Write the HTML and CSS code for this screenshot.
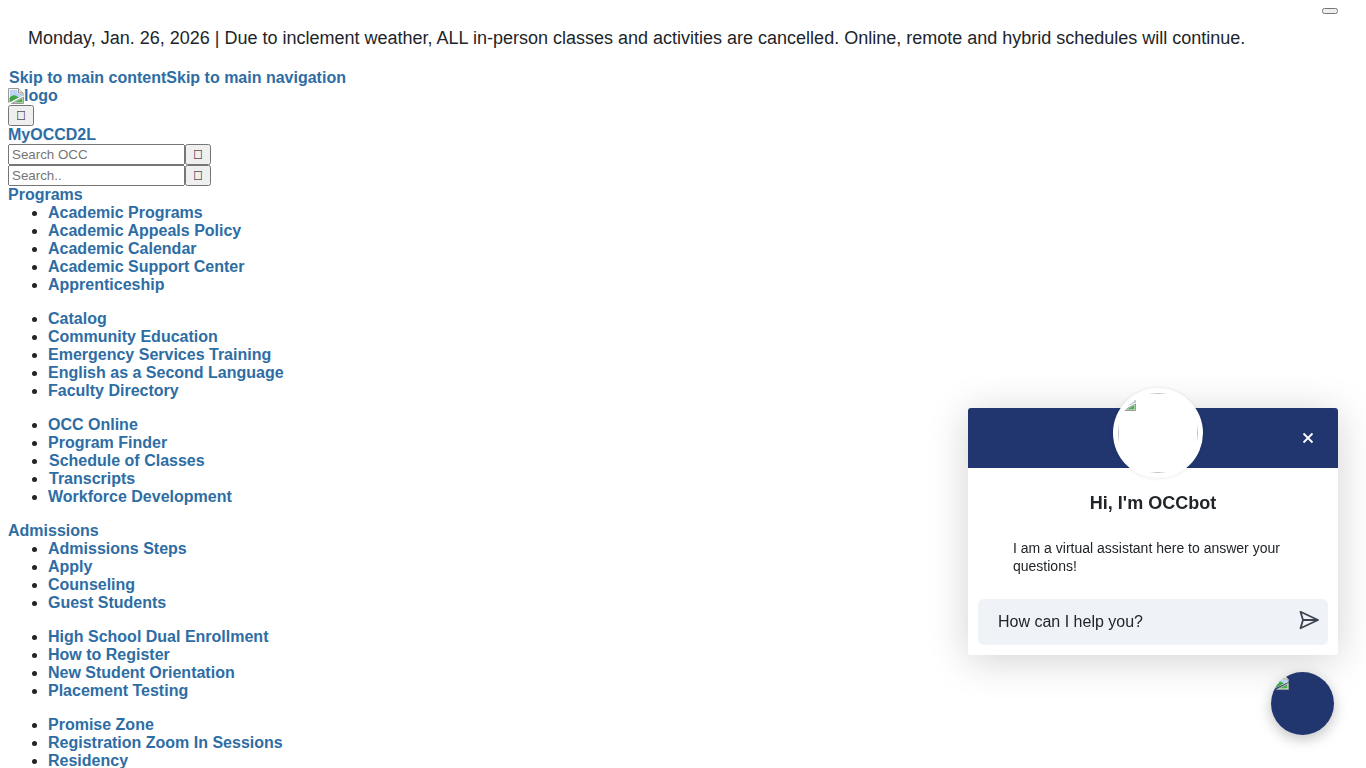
FILE: index.html
```html
<!DOCTYPE html>
<html lang="en">
<head>
<meta charset="utf-8">
<title>OCC</title>
<link rel="stylesheet" href="styles.css">
</head>
<body>
<svg class="defs" width="0" height="0" aria-hidden="true">
  <symbol id="broken" viewBox="0 0 16 16">
    <path d="M.5 15V.5h10l5 5V8L.5 15z" fill="#f4f4f4"/>
    <path d="M.5 14.500V.5h10l4.500 4.500v3" fill="none" stroke="#999"/>
    <path d="M10.500.5v4.500H15" fill="#e6e6e6" stroke="#999"/>
    <path d="M2 2h7.500v4H14v2.200L2 13.800z" fill="#bcd2f5"/>
    <path d="M1.500 14.500V10C4 7 6.500 6.500 9 8.500L11 9.200 1.500 14.500z" fill="#3fa63f"/>
    <path d="M3.500 15.500h12V9L3.500 15.500z" fill="#f4f4f4" stroke="#999"/>
    <path d="M6.500 14.500l8-4.200v4.200z" fill="#4fae4f"/>
  </symbol>
</svg>

<div class="banner">
  <button class="banner-close" type="button"></button>
  <p class="banner-text">Monday, Jan. 26, 2026 | Due to inclement weather, ALL in-person classes and activities are cancelled. Online, remote and hybrid schedules will continue.</p>
</div>

<div class="skip"><a href="#">Skip to main content</a><a href="#">Skip to main navigation</a></div>
<div class="logo"><a href="#"><svg class="broken" width="16" height="16"><use href="#broken"/></svg>logo</a></div>
<div class="row"><button type="button">&#xf0c9;</button></div>
<div class="link-row"><a href="#">MyOCCD2L</a></div>
<form class="search"><input type="text" placeholder="Search OCC"><button type="button">&#xf002;</button></form>
<form class="search"><input type="text" placeholder="Search.."><button type="button">&#xf002;</button></form>

<nav>
  <a href="#">Programs</a>
  <ul>
    <li><a href="#">Academic Programs</a></li>
    <li><a href="#">Academic Appeals Policy</a></li>
    <li><a href="#">Academic Calendar</a></li>
    <li><a href="#">Academic Support Center</a></li>
    <li><a href="#">Apprenticeship</a></li>
  </ul>
  <ul>
    <li><a href="#">Catalog</a></li>
    <li><a href="#">Community Education</a></li>
    <li><a href="#">Emergency Services Training</a></li>
    <li><a href="#">English as a Second Language</a></li>
    <li><a href="#">Faculty Directory</a></li>
  </ul>
  <ul>
    <li><a href="#">OCC Online</a></li>
    <li><a href="#">Program Finder</a></li>
    <li class="nudge"><a href="#">Schedule of Classes</a></li>
    <li class="nudge"><a href="#">Transcripts</a></li>
    <li><a href="#">Workforce Development</a></li>
  </ul>
  <a href="#">Admissions</a>
  <ul>
    <li><a href="#">Admissions Steps</a></li>
    <li><a href="#">Apply</a></li>
    <li><a href="#">Counseling</a></li>
    <li><a href="#">Guest Students</a></li>
  </ul>
  <ul>
    <li><a href="#">High School Dual Enrollment</a></li>
    <li><a href="#">How to Register</a></li>
    <li><a href="#">New Student Orientation</a></li>
    <li><a href="#">Placement Testing</a></li>
  </ul>
  <ul>
    <li><a href="#">Promise Zone</a></li>
    <li><a href="#">Registration Zoom In Sessions</a></li>
    <li><a href="#">Residency</a></li>
  </ul>
</nav>

<aside class="chat">
  <div class="chat-head">
    <div class="chat-avatar">
      <div class="round-img"><div class="frame"><svg class="frame-icon" width="16" height="16"><use href="#broken"/></svg></div></div>
    </div>
    <svg class="chat-x" width="12" height="12" viewBox="0 0 12 12"><path d="M1.500 1.500l9 9M10.500 1.500l-9 9" stroke="#fff" stroke-width="1.800" fill="none"/></svg>
  </div>
  <h2 class="chat-title">Hi, I'm OCCbot</h2>
  <p class="chat-msg">I am a virtual assistant here to answer your questions!</p>
  <div class="chat-input">
    <span>How can I help you?</span>
    <svg width="20" height="20" viewBox="0 0 20 20"><path d="M1.500 1.800L19 10 1.500 18.200 4 10zM4 10h15" fill="none" stroke="#3d4450" stroke-width="1.800" stroke-linejoin="round"/></svg>
  </div>
</aside>
<div class="fab"><svg class="fab-icon" width="16" height="16"><use href="#broken"/></svg></div>
</body>
</html>
```
FILE: styles.css
```css
html, body {
  background: #fff;
}
body {
  margin: 8px;
  font-family: "Liberation Sans", Arial, sans-serif;
  font-size: 16px;
  line-height: 18px;
  color: #212529;
}
a {
  color: #2e6da4;
  font-weight: 700;
  text-decoration: none;
}
.defs {
  position: absolute;
}
button {
  font-family: "Liberation Sans", Arial, sans-serif;
  font-size: 13.333px;
  line-height: 15px;
  vertical-align: top;
}
.banner {
  height: 61px;
}
.banner-close {
  float: right;
  margin-right: 20px;
  width: 16px;
  height: 6px;
  padding: 0;
}
.banner-text {
  margin: 0;
  padding: 20px 0 0 20px;
  font-size: 18px;
  line-height: 20px;
}
.skip {
  padding-left: 1px;
}
.logo {
  height: 18px;
}
.broken {
  vertical-align: -3px;
}
.row {
  height: 21px;
}
.link-row {
  height: 18px;
}
.search {
  display: flex;
  height: 21px;
  margin: 0;
}
.search input {
  width: 177px;
  height: 21px;
  box-sizing: border-box;
  font-family: "Liberation Sans", Arial, sans-serif;
  font-size: 13.333px;
  padding: 1px 2px;
}
nav ul {
  margin: 0 0 16px;
  padding-left: 40px;
}
.nudge {
  padding-left: 1px;
}
.chat {
  position: fixed;
  left: 968px;
  top: 408px;
  width: 370px;
  height: 247px;
  background: #fff;
  border-radius: 3px;
  box-shadow: 0 5px 40px rgba(0, 0, 0, .18);
}
.chat-head {
  position: relative;
  height: 60px;
  background: #21366f;
  border-radius: 3px 3px 0 0;
}
.chat-avatar {
  position: absolute;
  left: 145px;
  top: -20px;
  width: 90px;
  height: 90px;
  display: flex;
  align-items: center;
  justify-content: center;
  background: #fff;
  border-radius: 50%;
  box-shadow: 0 0 4px rgba(0, 0, 0, .1);
}
.round-img {
  width: 80px;
  height: 80px;
  border-radius: 50%;
  overflow: hidden;
}
.frame {
  width: 80px;
  height: 80px;
  box-sizing: border-box;
  border: 1px solid #c0c0c0;
  padding: 1px;
}
.frame-icon {
  display: block;
}
.chat-x {
  position: absolute;
  left: 334px;
  top: 24px;
}
.chat-title {
  margin: 25px 0 0;
  font-size: 18px;
  line-height: 20px;
  font-weight: 700;
  text-align: center;
}
.chat-msg {
  margin: 26px 0 0;
  padding: 0 45px;
  font-size: 14px;
  line-height: 18px;
}
.chat-input {
  display: flex;
  align-items: center;
  justify-content: space-between;
  margin: 24px 10px 0;
  height: 46px;
  padding: 0 9px 0 20px;
  background: #eff2f6;
  border-radius: 6px;
}
.chat-input svg {
  margin-bottom: 4px;
}
.fab {
  position: fixed;
  left: 1270.500px;
  top: 672px;
  width: 63px;
  height: 63px;
  overflow: hidden;
  background: #21366f;
  border-radius: 50%;
  box-shadow: 0 4px 14px rgba(0, 0, 0, .25);
}
.fab-icon {
  display: block;
  margin: 2px;
}
```
